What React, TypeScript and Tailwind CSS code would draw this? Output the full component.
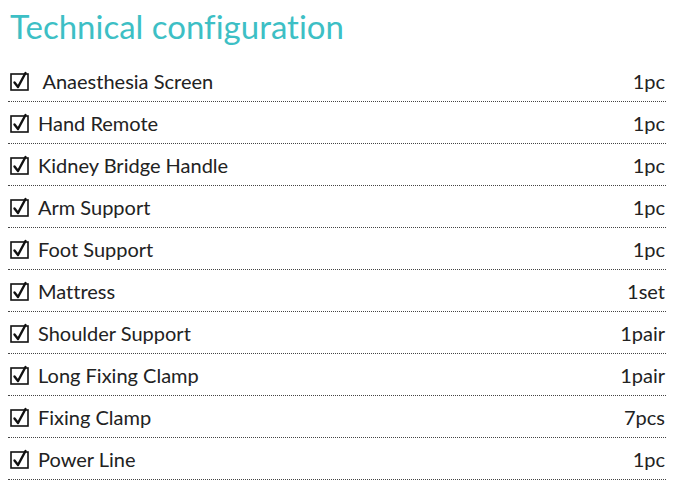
const items: [string, string][] = [
  [' Anaesthesia Screen', '1pc'],
  ['Hand Remote', '1pc'],
  ['Kidney Bridge Handle', '1pc'],
  ['Arm Support', '1pc'],
  ['Foot Support', '1pc'],
  ['Mattress', '1set'],
  ['Shoulder Support', '1pair'],
  ['Long Fixing Clamp', '1pair'],
  ['Fixing Clamp', '7pcs'],
  ['Power Line', '1pc'],
];

function CheckBox() {
  return (
    <svg width="20" height="20" viewBox="0 0 20 20" className="shrink-0">
      <rect x="1" y="3" width="17" height="16" fill="none" stroke="#111" strokeWidth="1.6" />
      <path d="M4.5 11.5 L8 16 L15.5 2" fill="none" stroke="#111" strokeWidth="2.4" strokeLinecap="round" strokeLinejoin="round" />
    </svg>
  );
}

export default function App() {
  return (
    <div className="w-[684px] h-[493px] bg-white font-['Lato','Liberation_Sans',sans-serif] [font-feature-settings:'liga'_0,'clig'_0]">
      <div className="h-[60px] pl-[10px] pt-[4px] text-[33px] leading-[44px] text-[#3dbfc5]">
        Technical configuration
      </div>
      <div className="ml-[8px] w-[658px]">
        {items.map(([name, qty]) => (
          <div
            key={name}
            className="flex h-[42px] items-center justify-between border-b border-dotted border-[#444] pt-[1px] text-[20px] text-[#222]"
          >
            <div className="flex items-center gap-[8px] pl-[2px]">
              <CheckBox />
              <span className="whitespace-pre">{name}</span>
            </div>
            <span className="pr-[1px]">{qty}</span>
          </div>
        ))}
      </div>
    </div>
  );
}
